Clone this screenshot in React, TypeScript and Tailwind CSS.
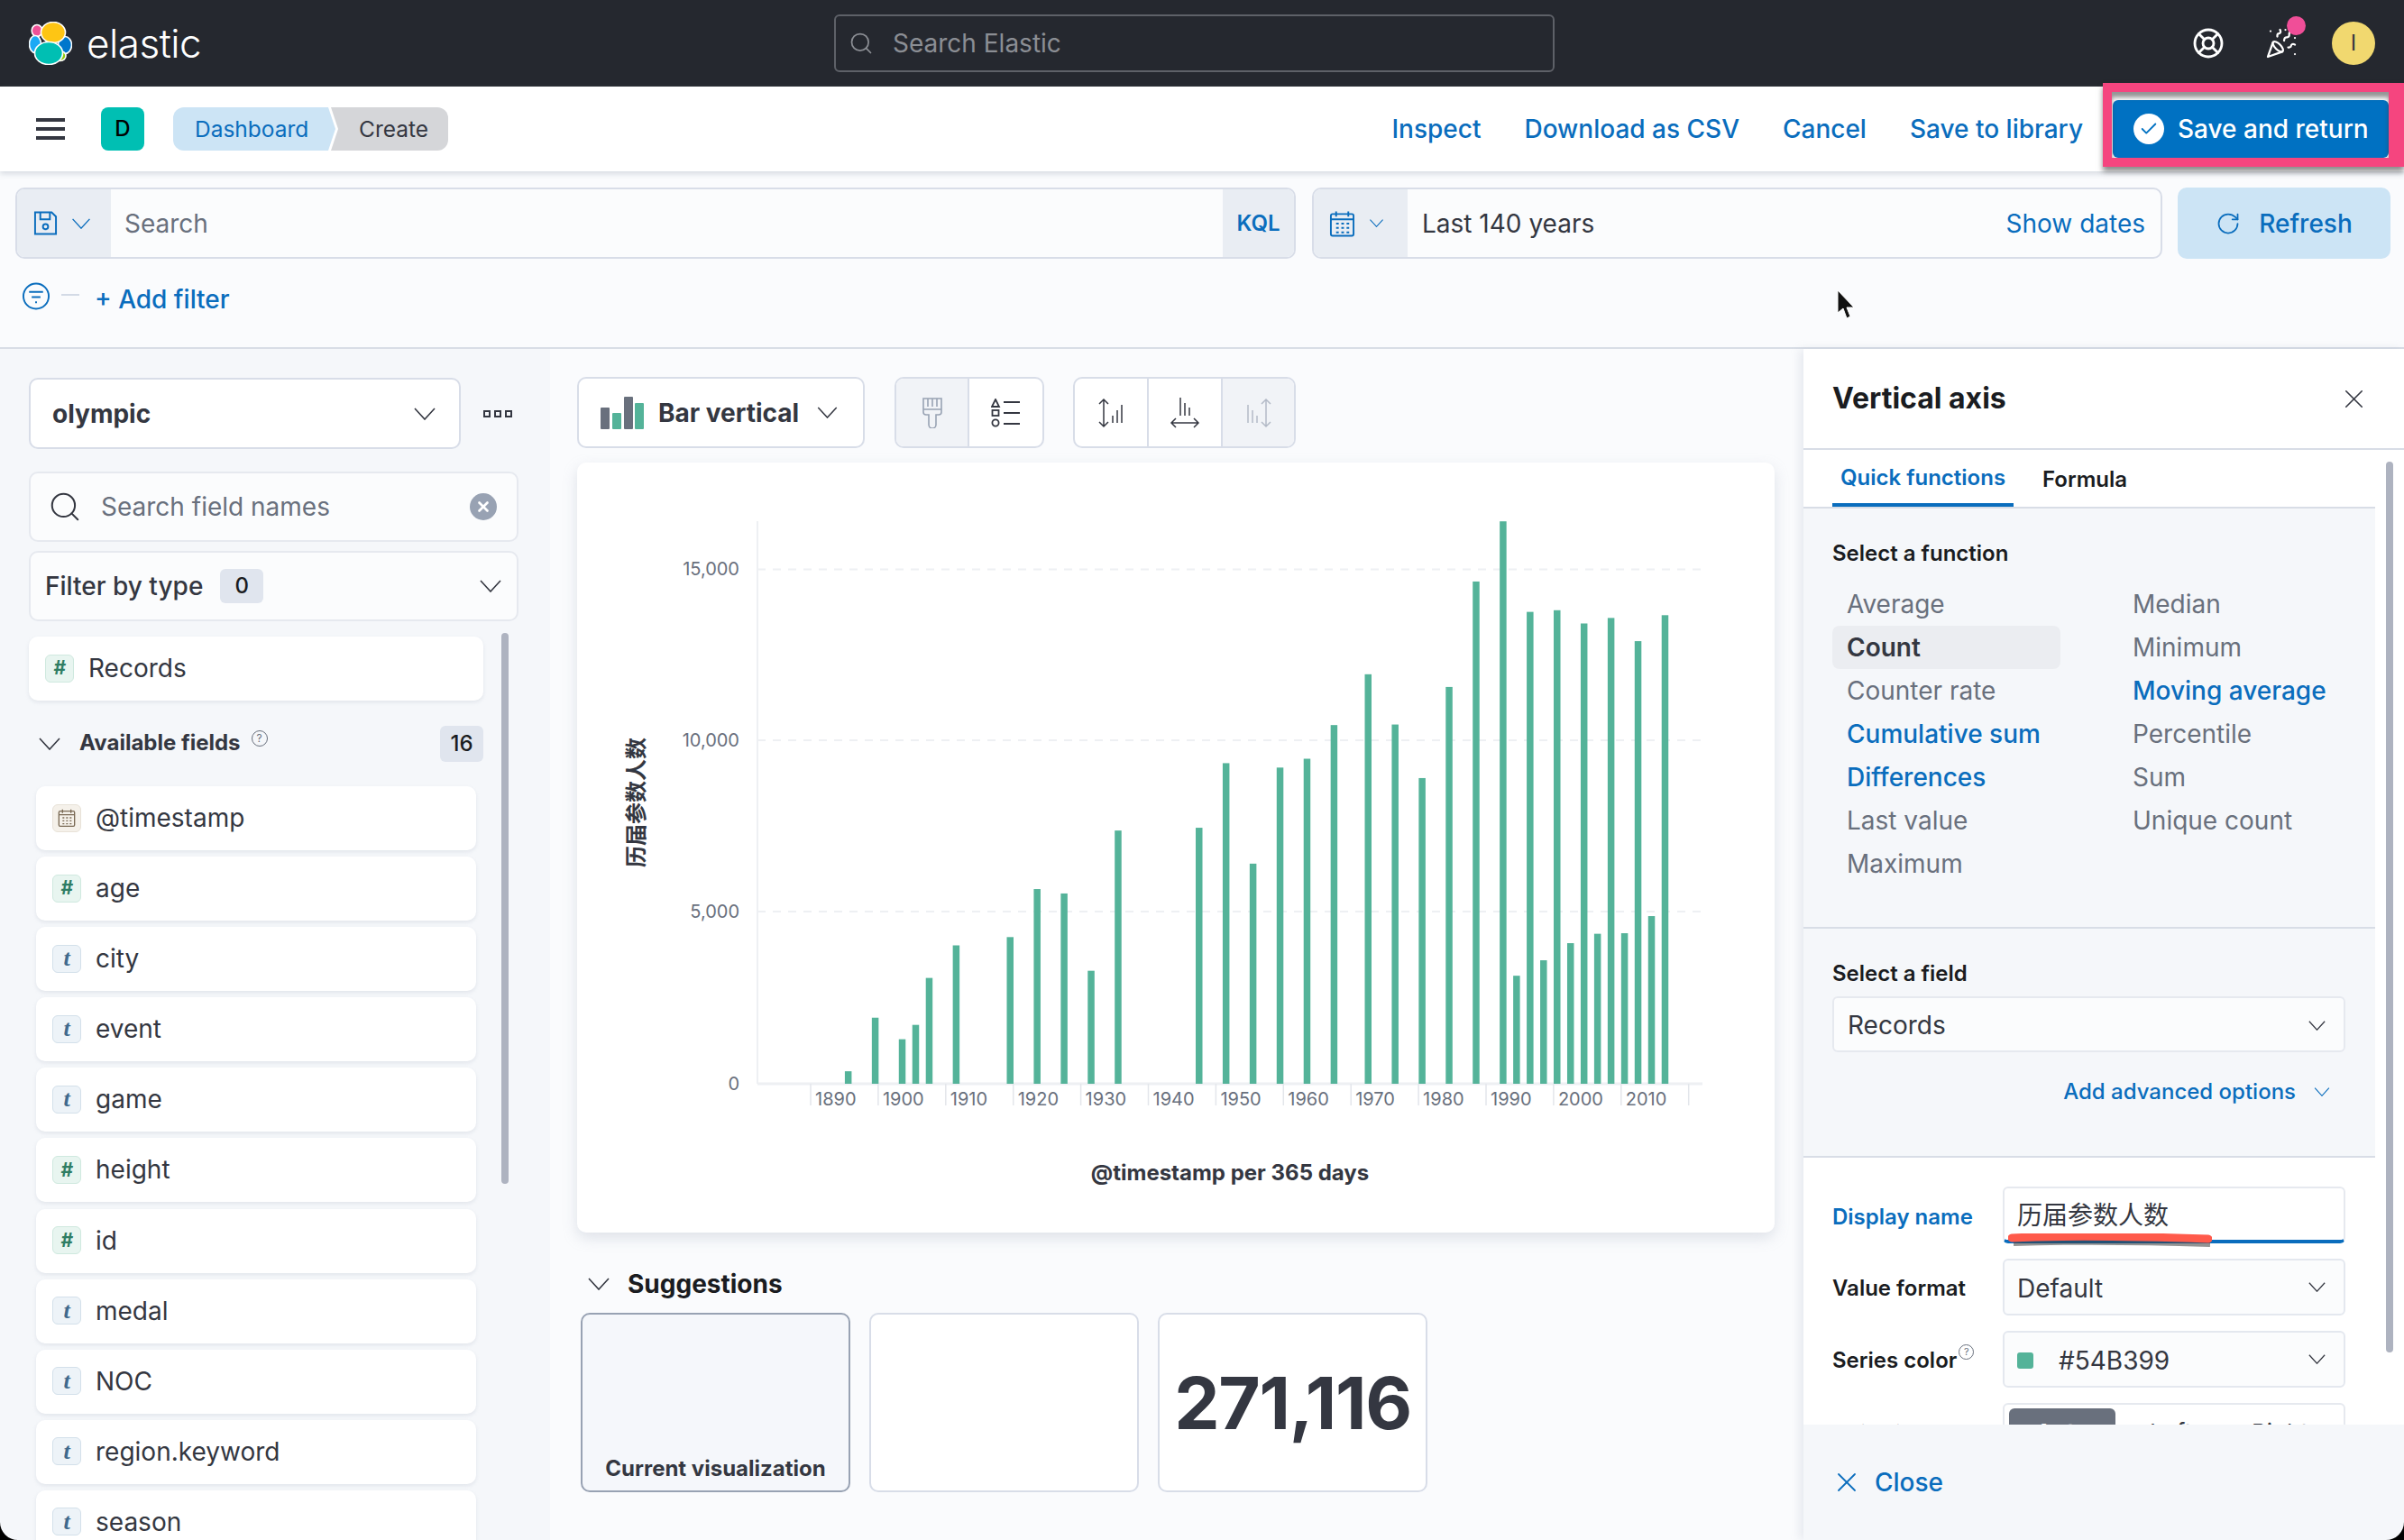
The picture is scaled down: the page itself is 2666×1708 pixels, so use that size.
import { Check, LifeBuoy, PartyPopper, RotateCw, Search, X } from "lucide-react";

const FIELDS = [
  { name: "@timestamp", type: "date" },
  { name: "age", type: "num" },
  { name: "city", type: "text" },
  { name: "event", type: "text" },
  { name: "game", type: "text" },
  { name: "height", type: "num" },
  { name: "id", type: "num" },
  { name: "medal", type: "text" },
  { name: "NOC", type: "text" },
  { name: "region.keyword", type: "text" },
  { name: "season", type: "text" },
];

// x centre and top of each bar, in chart panel pixels
const BARS = [
  [364, 1287], [398, 1190], [432, 1229], [449, 1203], [466, 1118], [500, 1059], [568, 1044], [602, 957],
  [636, 965], [670, 1105], [704, 851], [806, 846], [840, 729], [874, 911], [908, 737], [942, 721],
  [976, 660], [1019, 568], [1053, 659], [1087, 756], [1121, 591], [1155, 400], [1189, 291], [1206, 1114],
  [1223, 455], [1240, 1086], [1257, 452], [1274, 1055], [1291, 476], [1308, 1038], [1325, 466], [1342, 1037],
  [1359, 508], [1376, 1006], [1393, 461],
].map(([x, y]) => [x / 1.136 - 20, y / 1.633 - 113]);

const YEARS = [1890, 1900, 1910, 1920, 1930, 1940, 1950, 1960, 1970, 1980, 1990, 2000, 2010];

const FUNCTIONS = [
  ["Average", ""], ["Count", "active"], ["Counter rate", ""], ["Cumulative sum", "link"], ["Differences", "link"],
  ["Last value", ""], ["Maximum", ""], ["Median", ""], ["Minimum", ""], ["Moving average", "link"],
  ["Percentile", ""], ["Sum", ""], ["Unique count", ""],
];

function Chev({ className }: { className: string }) {
  return (
    <svg viewBox="0 0 24 14" fill="none" stroke="currentColor" strokeWidth="1.6" className={className}>
      <path d="M1 1l11 12L23 1" />
    </svg>
  );
}

function Logo() {
  return (
    <svg viewBox="0 0 48 48" className="h-[48px] w-[48px]">
      <g stroke="#fff" strokeWidth="1.6">
        <ellipse cx="9" cy="10" rx="5.8" ry="6.5" fill="#ee5097" />
        <ellipse cx="7" cy="25" rx="6.5" ry="9.5" fill="#1ba9f5" />
        <ellipse cx="40" cy="26" rx="7.5" ry="9.5" fill="#0077cc" />
        <ellipse cx="35" cy="38" rx="6" ry="5.5" fill="#93c90e" />
        <ellipse cx="27" cy="12" rx="13.5" ry="11.5" fill="#fec514" />
        <ellipse cx="22" cy="35" rx="15.5" ry="12.5" fill="#00bfb3" />
      </g>
    </svg>
  );
}

function SaveIcon() {
  return (
    <svg viewBox="0 0 28 28" fill="none" stroke="#0a6dbd" strokeWidth="2" className="h-[27px] w-[27px]">
      <path d="M2 1.5h19l5 5v20H2z" />
      <path d="M8 1.5v8h11v-8" />
      <circle cx="14" cy="18" r="3" />
    </svg>
  );
}

function CalendarIcon({ className, color }: { className: string; color: string }) {
  return (
    <svg viewBox="0 0 30 30" fill="none" stroke={color} strokeWidth="2" className={className}>
      <rect x="2" y="4" width="26" height="25" rx="2" />
      <path d="M2 10h26M8 1v6M22 1v6" />
      <path d="M8 15h3M14 15h3M20 15h3M8 20h3M14 20h3M20 20h3M8 25h3M14 25h3M20 25h3" strokeDasharray="3 0" />
    </svg>
  );
}

function FieldToken({ type }: { type: string }) {
  if (type === "date") {
    return (
      <span className="flex h-[31px] w-[32px] items-center justify-center rounded-md border border-[#e8e2d8] bg-[#f5f1ea]">
        <CalendarIcon className="h-[20px] w-[20px]" color="#7a6a55" />
      </span>
    );
  }
  if (type === "num") {
    return (
      <span className="flex h-[31px] w-[32px] items-center justify-center rounded-md border border-[#cfe9df] bg-[#e8f5f0] text-[21px] font-bold italic text-[#2f7d63]">
        #
      </span>
    );
  }
  return (
    <span className="flex h-[31px] w-[32px] items-center justify-center rounded-md border border-[#d3e0ea] bg-[#edf3f8] text-[26px] font-bold italic leading-none text-[#40698c] [font-family:'Liberation_Serif',serif]">
      t
    </span>
  );
}

function FieldCard({ name, type, inset }: { name: string; type: string; inset?: boolean }) {
  return (
    <div
      className={`flex h-[71px] shrink-0 items-center gap-[16px] rounded-[10px] bg-white pb-[1px] pl-[18px] text-[28px] text-[#343741] shadow-[0_2px_4px_rgba(152,162,179,0.2)] ${
        inset ? "mx-[8px]" : ""
      }`}
    >
      <FieldToken type={type} />
      <span>{name}</span>
    </div>
  );
}

function SelectBox({ children }: { children: React.ReactNode }) {
  return (
    <div className="flex h-[63px] w-[380px] items-center justify-between rounded-md border-2 border-[#e4e8ef] bg-[#fbfcfd] pl-[14px] pr-[20px] text-[28px] text-[#343741]">
      <div className="flex items-center pt-[2px]">{children}</div>
      <Chev className="h-[11px] w-[19px] text-[#343741]" />
    </div>
  );
}

function Chart() {
  return (
    <svg viewBox="0 0 1328 854" className="h-[854px] w-[1328px]">
      <path d="M200 65V689" stroke="#eef0f3" strokeWidth="2" />
      {[118.5, 308, 498].map((y) => (
        <path key={y} d={`M200 ${y}H1248`} stroke="#eef0f3" strokeWidth="2" strokeDasharray="9 8" />
      ))}
      <path d="M200 689H1248" stroke="#eef0f3" strokeWidth="3" />
      {BARS.map(([x, y]) => (
        <rect key={x} x={x - 3.5} y={y} width="7.5" height={689 - y} fill="#54b399" />
      ))}
      {YEARS.map((year, i) => (
        <g key={year}>
          <path d={`M${259 + i * 74.9} 689v24`} stroke="#e3e6eb" strokeWidth="1.5" />
          <text x={264 + i * 74.9} y="713" fontSize="20" fill="#69707d">
            {year}
          </text>
        </g>
      ))}
      <path d={`M${259 + 13 * 74.9} 689v24`} stroke="#e3e6eb" strokeWidth="1.5" />
      {[["15,000", 125], ["10,000", 315], ["5,000", 505], ["0", 696]].map(([label, y]) => (
        <text key={label} x="180" y={y} textAnchor="end" fontSize="20" fill="#69707d">
          {label}
        </text>
      ))}
      <text
        transform="translate(74 377) rotate(-90)"
        textAnchor="middle"
        fontSize="24"
        fontWeight="700"
        fill="#343741"
      >
        历届参数人数
      </text>
      <text x="724" y="796" textAnchor="middle" fontSize="24" fontWeight="700" fill="#343741">
        @timestamp per 365 days
      </text>
    </svg>
  );
}

export default function App() {
  return (
    <div className="relative flex h-[1708px] w-[2666px] flex-col overflow-hidden bg-[#fafbfd] [font-family:Inter,'Noto_Sans_CJK_SC',sans-serif]">
      {/* top bar */}
      <header className="flex h-[96px] shrink-0 items-center bg-[#25282f]">
        <div className="flex w-[925px] items-center pl-[32px]">
          <Logo />
          <span className="ml-[16px] text-[44px] font-light leading-none tracking-[-0.5px] text-white">elastic</span>
        </div>
        <div className="flex h-[64px] w-[799px] items-center rounded-md border-2 border-[#5e6168] pl-[14px] text-[28px] text-[#8b8e94]">
          <Search size={28} strokeWidth={1.5} />
          <span className="ml-[21px]">Search Elastic</span>
        </div>
        <div className="relative flex flex-1 items-center justify-end pr-[32px] text-white">
          <LifeBuoy size={36} strokeWidth={1.9} className="mr-[45px]" />
          <div className="relative mr-[38px]">
            <PartyPopper size={36} strokeWidth={1.5} />
            <span className="absolute -right-[9px] -top-[12px] h-[21px] w-[21px] rounded-full bg-[#f04e98]" />
          </div>
          <div className="flex h-[48px] w-[48px] items-center justify-center rounded-full bg-[#f1d86f] text-[24px] text-[#343741]">
            I
          </div>
        </div>
      </header>

      {/* breadcrumb and actions */}
      <div className="relative z-10 flex h-[94px] shrink-0 items-center bg-white pl-[40px] shadow-[0_3px_6px_rgba(152,162,179,0.35)]">
        <div className="flex h-[24px] w-[32px] flex-col justify-between">
          <span className="h-[4px] bg-[#343741]" />
          <span className="h-[4px] bg-[#343741]" />
          <span className="h-[4px] bg-[#343741]" />
        </div>
        <div className="ml-[40px] flex h-[48px] w-[48px] items-center justify-center rounded-lg bg-[#00bfb3] text-[24px] font-medium text-black">
          D
        </div>
        <div className="ml-[32px] flex h-[48px] text-[24.5px]">
          <div className="flex w-[180px] items-center rounded-l-xl bg-[#cce4f5] pl-[24px] text-[#0a6dbd] [clip-path:polygon(0_0,172px_0,180px_50%,172px_100%,0_100%)]">
            Dashboard
          </div>
          <div className="-ml-[5px] flex w-[130px] items-center rounded-r-xl bg-[#d5d6d9] pl-[31px] text-[#343741] [clip-path:polygon(0_0,100%_0,100%_100%,0_100%,8px_50%)]">
            Create
          </div>
        </div>
        <div className="ml-auto flex items-center pr-[17px] text-[28px] font-medium text-[#0a6dbd]">
          <span>Inspect</span>
          <span className="ml-[48px]">Download as CSV</span>
          <span className="ml-[48px]">Cancel</span>
          <span className="ml-[48px]">Save to library</span>
          <div className="ml-[33px] flex h-[64px] w-[306px] items-center rounded-md bg-[#0071c2] pl-[23px] text-white">
            <span className="flex h-[34px] w-[34px] items-center justify-center rounded-full bg-white">
              <Check size={22} strokeWidth={2} className="text-[#0071c2]" />
            </span>
            <span className="ml-[15px]">Save and return</span>
          </div>
        </div>
        {/* annotation around the button */}
        <div className="absolute -top-[4px] right-0 h-[93px] w-[334px] border-[10px] border-r-[17px] border-[#f5457f] shadow-[0_5px_6px_rgba(60,60,60,0.6),inset_0_6px_5px_rgba(60,60,60,0.55)]" />
      </div>

      {/* query bar */}
      <div className="h-[197px] shrink-0 border-b-2 border-[#d8dde6] pl-[17px] pt-[18px]">
        <div className="flex">
          <div className="flex h-[79px] w-[1420px] overflow-hidden rounded-[10px] border-2 border-[#d8dde8] bg-[#fbfcfd]">
            <div className="flex w-[104px] items-center gap-[15px] bg-[#e9edf3] pl-[18px]">
              <SaveIcon />
              <Chev className="h-[12px] w-[22px] text-[#0a6dbd]" />
            </div>
            <div className="flex flex-1 items-center pl-[15px] text-[28px] text-[#69707d]">Search</div>
            <div className="flex w-[79px] items-center justify-center bg-[#e9edf3] text-[24px] font-semibold text-[#0a6dbd]">
              KQL
            </div>
          </div>
          <div className="ml-[18px] flex h-[79px] w-[943px] overflow-hidden rounded-[10px] border-2 border-[#d8dde8] bg-[#fbfcfd]">
            <div className="flex w-[104px] items-center gap-[15px] bg-[#e9edf3] pl-[17px]">
              <CalendarIcon className="h-[30px] w-[29px]" color="#0a6dbd" />
              <Chev className="h-[9px] w-[17px] text-[#0a6dbd]" />
            </div>
            <div className="flex flex-1 items-center justify-between pl-[16px] pr-[17px] text-[28px] text-[#343741]">
              <span>Last 140 years</span>
              <span className="text-[#0a6dbd]">Show dates</span>
            </div>
          </div>
          <div className="ml-[17px] flex h-[79px] w-[236px] items-center justify-center gap-[20px] rounded-[10px] bg-[#cce4f5] text-[28px] font-medium text-[#0a6dbd]">
            <RotateCw size={28} strokeWidth={1.5} />
            Refresh
          </div>
        </div>
        <div className="mt-[24px] flex items-center pl-[7px]">
          <svg viewBox="0 0 32 32" fill="none" stroke="#0a6dbd" strokeWidth="2" className="h-[31px] w-[32px] -translate-y-[4px]">
            <circle cx="16" cy="16" r="14.5" />
            <path d="M8 11h16M11 17h10M15 23h2" />
          </svg>
          <span className="ml-[12px] h-[2px] w-[20px] -translate-y-[5px] bg-[#d3dae6]" />
          <span className="ml-[17px] text-[28px] font-medium text-[#0a6dbd]">+ Add filter</span>
        </div>
      </div>

      <div className="flex min-h-0 flex-1">
        {/* field list */}
        <aside className="w-[610px] shrink-0 overflow-hidden bg-[#f5f7fa] pl-[32px] pt-[32px]">
          <div className="flex items-center">
            <div className="flex h-[79px] w-[479px] items-center justify-between rounded-[10px] border-2 border-[#d8dde8] bg-white pl-[24px] pr-[26px] text-[28px] font-bold text-[#343741]">
              olympic
              <Chev className="h-[14px] w-[24px]" />
            </div>
            <svg viewBox="0 0 32 10" fill="none" stroke="#343741" strokeWidth="2" className="ml-[25px] h-[10px] w-[32px]">
              <rect x="1" y="2" width="6" height="6" />
              <rect x="13" y="2" width="6" height="6" />
              <rect x="25" y="2" width="6" height="6" />
            </svg>
          </div>
          <div className="mt-[25px] flex h-[78px] w-[543px] items-center rounded-[10px] border-2 border-[#e6e9ef] bg-[#fbfcfd] pl-[19px] pr-[22px] text-[28px] text-[#69707d]">
            <Search size={38} strokeWidth={1.3} className="text-[#343741]" />
            <span className="ml-[21px]">Search field names</span>
            <span className="ml-auto flex h-[30px] w-[30px] items-center justify-center rounded-full bg-[#98a2b3]">
              <X size={18} strokeWidth={3.5} className="text-white" />
            </span>
          </div>
          <div className="mt-[10px] flex h-[78px] w-[543px] items-center rounded-[10px] border-2 border-[#e6e9ef] bg-[#fbfcfd] pl-[16px] pr-[17px] text-[28px] font-medium text-[#343741]">
            Filter by type
            <span className="ml-[19px] flex h-[38px] w-[48px] items-center justify-center rounded-md bg-[#e0e5ee] text-[24px] text-[#1a1c21]">
              0
            </span>
            <Chev className="ml-auto h-[14px] w-[24px]" />
          </div>
          <div className="mt-[13px] flex">
            <div className="mt-[4px] flex h-[1000px] w-[504px] flex-col">
              <FieldCard name="Records" type="num" />
              <div className="mb-[27px] mt-[28px] flex h-[40px] shrink-0 items-center pl-[11px]">
                <Chev className="h-[14px] w-[24px] text-[#343741]" />
                <span className="ml-[21px] -translate-y-[1px] text-[24px] font-bold text-[#343741]">Available fields</span>
                <span className="ml-[12px] flex h-[18px] w-[18px] -translate-y-[6px] items-center justify-center rounded-full border border-[#69707d] text-[12px] text-[#69707d]">
                  ?
                </span>
                <span className="ml-auto flex h-[40px] w-[48px] items-center justify-center rounded-md bg-[#e0e5ee] text-[24px] font-medium text-[#1a1c21]">
                  16
                </span>
              </div>
              <div className="flex flex-col gap-[7.1px]">
                {FIELDS.map((f) => (
                  <FieldCard key={f.name} name={f.name} type={f.type} inset />
                ))}
              </div>
            </div>
            <div className="ml-[20px] h-[611px] w-[8px] rounded-full bg-[#aeb3c0]" />
          </div>
        </aside>

        {/* workspace */}
        <main className="w-[1390px] shrink-0 pl-[30px] pt-[31px]">
          <div className="flex h-[79px]">
            <div className="flex w-[319px] items-center rounded-[10px] border-2 border-[#d8dde8] bg-white pl-[24px] text-[28px] font-bold text-[#343741]">
              <svg viewBox="0 0 48 36" className="h-[36px] w-[48px]">
                <rect x="0" y="12" width="10" height="24" rx="1" fill="#69707d" />
                <rect x="13" y="18" width="10" height="18" rx="1" fill="#54b399" />
                <rect x="26" y="0" width="10" height="36" rx="1" fill="#69707d" />
                <rect x="38" y="7" width="10" height="29" rx="1" fill="#54b399" />
              </svg>
              <span className="ml-[16px]">Bar vertical</span>
              <Chev className="ml-[20px] h-[13px] w-[23px]" />
            </div>
            <div className="ml-[33px] flex w-[166px] overflow-hidden rounded-[10px] border-2 border-[#d8dde8] bg-white">
              <div className="flex w-[81px] items-center justify-center border-r-2 border-[#d8dde8] bg-[#f1f3f7]">
                <svg viewBox="0 0 24 34" fill="none" stroke="#98a2b3" strokeWidth="1.6" className="h-[34px] w-[24px]">
                  <path d="M2 1h20v15a3 3 0 0 1-3 3h-3v11a4 4 0 0 1-8 0V19H5a3 3 0 0 1-3-3z" />
                  <path d="M2 13h20M7 1v9M12 1v9M17 1v9" />
                </svg>
              </div>
              <div className="flex flex-1 items-center justify-center">
                <svg viewBox="0 0 34 32" fill="none" stroke="#343741" strokeWidth="1.8" className="h-[32px] w-[34px]">
                  <path d="M4 1l4 8H0z" transform="translate(1 0)" />
                  <rect x="1.5" y="13" width="7" height="6" />
                  <circle cx="5" cy="27" r="3.6" />
                  <path d="M14 4h18M14 16h18M14 28h18" />
                </svg>
              </div>
            </div>
            <div className="ml-[32px] flex w-[247px] overflow-hidden rounded-[10px] border-2 border-[#d8dde8] bg-white">
              <div className="flex w-[82px] items-center justify-center border-r-2 border-[#d8dde8]">
                <svg viewBox="0 0 30 34" fill="none" stroke="#343741" strokeWidth="1.5" className="h-[34px] w-[30px]">
                  <path d="M7 2v30M2 7l5-5 5 5M2 27l5 5 5-5M17 28v-8M22 28V14M27 28V8" />
                </svg>
              </div>
              <div className="flex w-[82px] items-center justify-center border-r-2 border-[#d8dde8]">
                <svg viewBox="0 0 34 36" fill="none" stroke="#343741" strokeWidth="1.5" className="h-[36px] w-[34px]">
                  <path d="M12 1v20M17 7v14M22 12v9M2 29h30M7 24l-5 5 5 5M27 24l5 5-5 5" />
                </svg>
              </div>
              <div className="flex flex-1 items-center justify-center bg-[#f1f3f7]">
                <svg viewBox="0 0 30 34" fill="none" stroke="#b3bac7" strokeWidth="1.5" className="h-[34px] w-[30px]">
                  <path d="M23 2v30M18 7l5-5 5 5M18 27l5 5 5-5M13 28v-8M8 28V14M3 28V8" />
                </svg>
              </div>
            </div>
          </div>
          <div className="mt-[16px] w-[1328px] rounded-[10px] bg-white shadow-[0_6px_16px_rgba(152,162,179,0.28)]">
            <Chart />
          </div>
          <div className="mt-[41px] flex h-[32px] items-center pl-[12px]">
            <Chev className="h-[14px] w-[24px] text-[#343741]" />
            <span className="ml-[20px] text-[28px] font-bold text-[#1a1c21]">Suggestions</span>
          </div>
          <div className="ml-[4px] mt-[16px] flex gap-[21px]">
            <div className="flex h-[199px] w-[299px] items-end justify-center rounded-[10px] border-2 border-[#98a2b3] bg-[#f5f7fb] pb-[6px] text-[24px] font-bold text-[#343741]">
              Current visualization
            </div>
            <div className="h-[199px] w-[299px] rounded-[10px] border-2 border-[#d8dde8] bg-white" />
            <div className="flex h-[199px] w-[299px] items-center justify-center rounded-[10px] border-2 border-[#d8dde8] bg-white text-[80px] font-bold tracking-[-1.3px] text-[#343741]">
              271,116
            </div>
          </div>
        </main>

        {/* dimension editor */}
        <section className="flex w-[666px] shrink-0 flex-col bg-white shadow-[-4px_0_10px_rgba(152,162,179,0.2)]">
          <div className="flex h-[112px] shrink-0 items-center justify-between border-b-2 border-[#d8dde6] pl-[32px] pr-[38px]">
            <span className="text-[32px] font-bold text-[#1a1c21]">Vertical axis</span>
            <X size={35} strokeWidth={1.1} className="text-[#343741]" />
          </div>
          <div className="flex min-h-0 flex-1 overflow-hidden">
            <div className="w-[634px] shrink-0">
              <div className="flex h-[65px] items-stretch border-b-2 border-[#d8dde6] pl-[32px] text-[24px] font-semibold">
                <div className="flex w-[201px] items-center justify-center border-b-[4px] border-[#0a6dbd] pt-[3px] text-[#0a6dbd]">
                  Quick functions
                </div>
                <div className="ml-[32px] flex items-center pt-[2px] text-[#1a1c21]">Formula</div>
              </div>
              <div className="h-[466px] border-b-2 border-[#d8dde6] bg-[#f5f7fa] pl-[32px] pt-[38px]">
                <div className="text-[24px] font-semibold leading-[24px] text-[#1a1c21]">Select a function</div>
                <div className="mt-[20px] grid w-[570px] grid-flow-col grid-cols-[317px_1fr] grid-rows-7">
                  {FUNCTIONS.map(([name, kind]) => (
                    <div
                      key={name}
                      className={`flex h-[48px] w-[253px] items-center rounded-lg pl-[16px] text-[28px] ${
                        kind === "active"
                          ? "bg-[#ebedf1] font-semibold text-[#343741]"
                          : kind === "link"
                            ? "font-medium text-[#0a6dbd]"
                            : "text-[#69707d]"
                      }`}
                    >
                      {name}
                    </div>
                  ))}
                </div>
              </div>
              <div className="h-[254px] border-b-2 border-[#d8dde6] bg-[#f5f7fa] pl-[32px] pt-[38px]">
                <div className="text-[24px] font-semibold leading-[24px] text-[#1a1c21]">Select a field</div>
                <div className="mt-[13px] flex h-[62px] w-[569px] items-center justify-between rounded-md border-2 border-[#e6e9ef] bg-[#fbfcfd] pl-[15px] pr-[20px] pt-[2px] text-[28px] text-[#343741]">
                  Records
                  <Chev className="h-[11px] w-[19px]" />
                </div>
                <div className="mt-[29px] flex h-[30px] items-center justify-end pr-[50px] text-[24px] font-medium text-[#0a6dbd]">
                  Add advanced options
                  <Chev className="ml-[20px] h-[10px] w-[18px]" />
                </div>
              </div>
              <div className="flex flex-col gap-[17px] pl-[32px] pt-[32px]">
                <div className="flex items-center">
                  <span className="w-[189px] pt-[4px] text-[24px] font-semibold text-[#0a6dbd]">Display name</span>
                  <div className="relative flex h-[63px] w-[380px] items-center rounded-md border-2 border-[#e6e9ef] border-b-[#0a6dbd] border-b-[4px] bg-white pl-[14px] pt-[3px] text-[28px] text-[#343741]">
                    历届参数人数
                    <svg viewBox="0 0 226 16" fill="none" className="absolute -bottom-[9px] left-[4px] h-[16px] w-[226px]">
                      <path d="M4 8c60-2 130-2 218 1" stroke="#3a3a3a" strokeWidth="6" opacity="0.55" transform="translate(2 3)" />
                      <path d="M4 5c60-3 130-2 218 1" stroke="#ff5a4b" strokeWidth="9" strokeLinecap="round" />
                    </svg>
                  </div>
                </div>
                <div className="flex items-center">
                  <span className="w-[189px] pt-[2px] text-[24px] font-semibold text-[#1a1c21]">Value format</span>
                  <SelectBox>Default</SelectBox>
                </div>
                <div className="flex items-center">
                  <span className="flex w-[189px] pt-[2px] text-[24px] font-semibold text-[#1a1c21]">
                    Series color
                    <span className="ml-[2px] flex h-[17px] w-[17px] items-center justify-center rounded-full border border-[#69707d] text-[11px] font-normal text-[#69707d]">
                      ?
                    </span>
                  </span>
                  <SelectBox>
                    <span className="mr-[28px] h-[18px] w-[18px] rounded-[3px] bg-[#54b399]" />
                    #54B399
                  </SelectBox>
                </div>
                <div className="flex items-center">
                  <span className="w-[189px] pt-[4px] text-[24px] font-semibold text-[#1a1c21]">Axis side</span>
                  <div className="flex h-[63px] w-[380px] items-center rounded-md border-2 border-[#e6e9ef] px-[5px] pt-[2px] text-[26px] text-[#343741]">
                    <span className="-mt-[2px] flex h-[52px] w-[118px] items-center justify-center rounded-md bg-[#69707d] pt-[2px] font-semibold text-white">
                      Auto
                    </span>
                    <span className="ml-[38px]">Left</span>
                    <span className="ml-[66px]">Right</span>
                  </div>
                </div>
              </div>
            </div>
            <div className="ml-[12px] mt-[13px] h-[988px] w-[8px] shrink-0 rounded-full bg-[#aeb3c0]" />
          </div>
          <div className="flex h-[128px] shrink-0 items-center bg-[#f5f7fa] pl-[30px] text-[28px] font-medium text-[#0a6dbd]">
            <X size={36} strokeWidth={1.2} />
            <span className="ml-[13px]">Close</span>
          </div>
        </section>
      </div>

      {/* pointer */}
      <svg viewBox="0 0 20 32" className="absolute left-[2037px] top-[322px] h-[32px] w-[20px]">
        <path d="M1 0v25l6-5 4 11 4-2-4-10h8z" fill="#111" stroke="#fff" strokeWidth="1" />
      </svg>
      {/* window corners */}
      <div className="absolute bottom-0 left-0 h-[20px] w-[20px] bg-black [clip-path:path('M0_0A20_20_0_0_0_20_20H0Z')]" />
      <div className="absolute bottom-0 right-0 h-[20px] w-[20px] bg-black [clip-path:path('M20_0A20_20_0_0_1_0_20H20Z')]" />
    </div>
  );
}
